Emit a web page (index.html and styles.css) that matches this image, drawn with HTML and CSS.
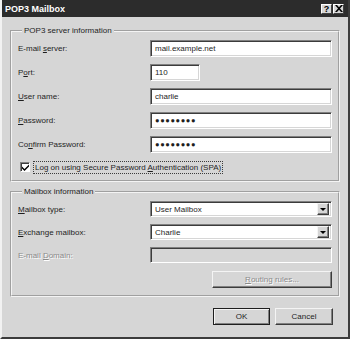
FILE: index.html
```html
<!DOCTYPE html>
<html lang="en">

<head>
    <meta charset="UTF-8">
    <meta name="viewport" content="width=device-width, initial-scale=1.0">
    <title>POP3 Mailbox</title>
    <link rel="stylesheet" href="styles.css">
</head>

<body>
    <div class="window">
        <div class="titlebar">
            <span class="title">POP3 Mailbox</span>
            <div class="caption-buttons">
                <span class="cap-btn">?</span>
                <span class="cap-btn close">
                    <svg width="8" height="7" viewBox="0 0 8 7">
                        <path d="M0 0h2l2 2.2L6 0h2L5 3.5 8 7H6L4 4.8 2 7H0l3-3.5z" fill="#000" />
                    </svg>
                </span>
            </div>
        </div>

        <div class="dialog-body">
            <!-- server settings -->
            <fieldset class="group group-server">
                <legend>POP3 server information</legend>
                <div class="form-row">
                    <label>E-mail <u>s</u>erver:</label>
                    <div class="field">mail.example.net</div>
                </div>
                <div class="form-row">
                    <label>P<u>o</u>rt:</label>
                    <div class="field field-port">110</div>
                </div>
                <div class="form-row">
                    <label><u>U</u>ser name:</label>
                    <div class="field">charlie</div>
                </div>
                <div class="form-row">
                    <label><u>P</u>assword:</label>
                    <div class="field field-pass">●●●●●●●●</div>
                </div>
                <div class="form-row">
                    <label>Co<u>n</u>firm Password:</label>
                    <div class="field field-pass">●●●●●●●●</div>
                </div>
                <div class="check-row">
                    <span class="checkbox">
                        <svg width="7" height="7" viewBox="0 0 7 7">
                            <path d="M0 2.5l2.5 2.5L7 0.5V2.5L2.5 7L0 4.5z" fill="#000" />
                        </svg>
                    </span>
                    <span class="check-label">Log on using Secure Password <u>A</u>uthentication (SPA)</span>
                </div>
            </fieldset>

            <!-- mailbox settings -->
            <fieldset class="group group-mailbox">
                <legend>Mailbox information</legend>
                <div class="form-row combo-row">
                    <label><u>M</u>ailbox type:</label>
                    <div class="field combo">
                        <span>User Mailbox</span>
                        <span class="drop-btn"><i class="arrow"></i></span>
                    </div>
                </div>
                <div class="form-row combo-row">
                    <label><u>E</u>xchange mailbox:</label>
                    <div class="field combo">
                        <span>Charlie</span>
                        <span class="drop-btn"><i class="arrow"></i></span>
                    </div>
                </div>
                <div class="form-row combo-row disabled">
                    <label>E-mail <u>D</u>omain:</label>
                    <div class="field field-disabled"></div>
                </div>
                <div class="button-row">
                    <span class="btn btn-routing disabled"><u>R</u>outing rules...</span>
                </div>
            </fieldset>

            <div class="footer">
                <span class="btn btn-ok">OK</span>
                <span class="btn btn-cancel">Cancel</span>
            </div>
        </div>
    </div>
</body>

</html>
```

FILE: styles.css
```css
* {
    margin: 0;
    padding: 0;
    box-sizing: border-box;
}

body {
    width: 350px;
    height: 339px;
    font-family: "Liberation Sans", Arial, sans-serif;
    font-size: 8px;
    color: #1e1e1e;
    background: #d6d6d6;
}

u {
    text-decoration: underline;
    text-underline-offset: 1px;
}

.window {
    width: 350px;
    height: 339px;
    display: flex;
    flex-direction: column;
    background: #d6d6d6;
    border-left: 2px solid #f2f2f2;
    border-right: 2px solid #3c3c3c;
    border-bottom: 2px solid #3c3c3c;
}

.titlebar {
    height: 17px;
    display: flex;
    align-items: center;
    justify-content: space-between;
    padding: 0 4px 0 3px;
    background: #2c2c2c;
}

.title {
    color: #fff;
    font-weight: bold;
    font-size: 9px;
}

.caption-buttons {
    display: flex;
    gap: 1px;
}

.cap-btn {
    width: 11px;
    height: 10px;
    display: flex;
    align-items: center;
    justify-content: center;
    font-weight: bold;
    font-size: 9px;
    color: #000;
    background: #d6d6d6;
    border-top: 1px solid #fff;
    border-left: 1px solid #fff;
    border-right: 1px solid #404040;
    border-bottom: 1px solid #404040;
}

.dialog-body {
    flex: 1;
    padding: 9px 8px 0 8px;
    display: flex;
    flex-direction: column;
}

.group {
    border: 2px groove #f4f4f4;
    padding: 4px 6px 6px 6px;
    display: flex;
    flex-direction: column;
    gap: 7px;
}

.group legend {
    margin-left: 4px;
    padding: 0 2px;
    line-height: 10px;
}

.group-mailbox {
    margin-top: 5px;
    padding-bottom: 7px;
}

.form-row {
    display: grid;
    grid-template-columns: 132px 1fr;
    align-items: center;
    height: 17px;
}

.combo-row {
    height: 16px;
}

.field {
    height: 100%;
    display: flex;
    align-items: center;
    padding-left: 4px;
    background: #fff;
    border: 1px solid;
    border-color: #808080 #fff #fff #808080;
    box-shadow: inset 1px 1px #3c3c3c, inset -1px -1px #d6d6d6;
    white-space: nowrap;
}

.field-port {
    width: 50px;
}

.field-pass {
    font-size: 7.5px;
    letter-spacing: 0.6px;
}

.field-disabled {
    background: #d6d6d6;
}

.disabled label {
    color: #8a8a8a;
    text-shadow: 1px 1px #fff;
}

.combo {
    justify-content: space-between;
    padding-right: 2px;
}

.drop-btn {
    width: 12px;
    height: 12px;
    display: flex;
    align-items: center;
    justify-content: center;
    background: #d6d6d6;
    border: 1px solid;
    border-color: #f4f4f4 #3c3c3c #3c3c3c #f4f4f4;
    box-shadow: inset -1px -1px #808080;
}

.arrow {
    width: 0;
    height: 0;
    border-left: 3px solid transparent;
    border-right: 3px solid transparent;
    border-top: 3px solid #000;
}

.check-row {
    display: flex;
    align-items: center;
    gap: 3px;
    height: 14px;
    padding-left: 2px;
}

.checkbox {
    width: 10px;
    height: 10px;
    display: flex;
    align-items: center;
    justify-content: center;
    background: #fff;
    border: 1px solid;
    border-color: #808080 #fff #fff #808080;
    box-shadow: inset 1px 1px #3c3c3c;
}

.check-label {
    padding: 1px 1px;
    border: 1px dotted #3c3c3c;
}

.button-row {
    display: flex;
    justify-content: flex-end;
    margin-top: 1px;
}

.btn {
    height: 17px;
    display: flex;
    align-items: center;
    justify-content: center;
    background: #d6d6d6;
    border: 1px solid;
    border-color: #f4f4f4 #3c3c3c #3c3c3c #f4f4f4;
    box-shadow: inset -1px -1px #808080;
}

.btn-routing {
    width: 120px;
}

.btn.disabled {
    color: #8a8a8a;
    text-shadow: 1px 1px #fff;
}

.footer {
    display: flex;
    justify-content: flex-end;
    gap: 5px;
    margin-top: 11px;
    padding-right: 7px;
}

.btn-ok {
    width: 57px;
    border: 1px solid #1e1e1e;
    box-shadow: inset 1px 1px #f4f4f4, inset -1px -1px #808080;
}

.btn-cancel {
    width: 58px;
}
```
